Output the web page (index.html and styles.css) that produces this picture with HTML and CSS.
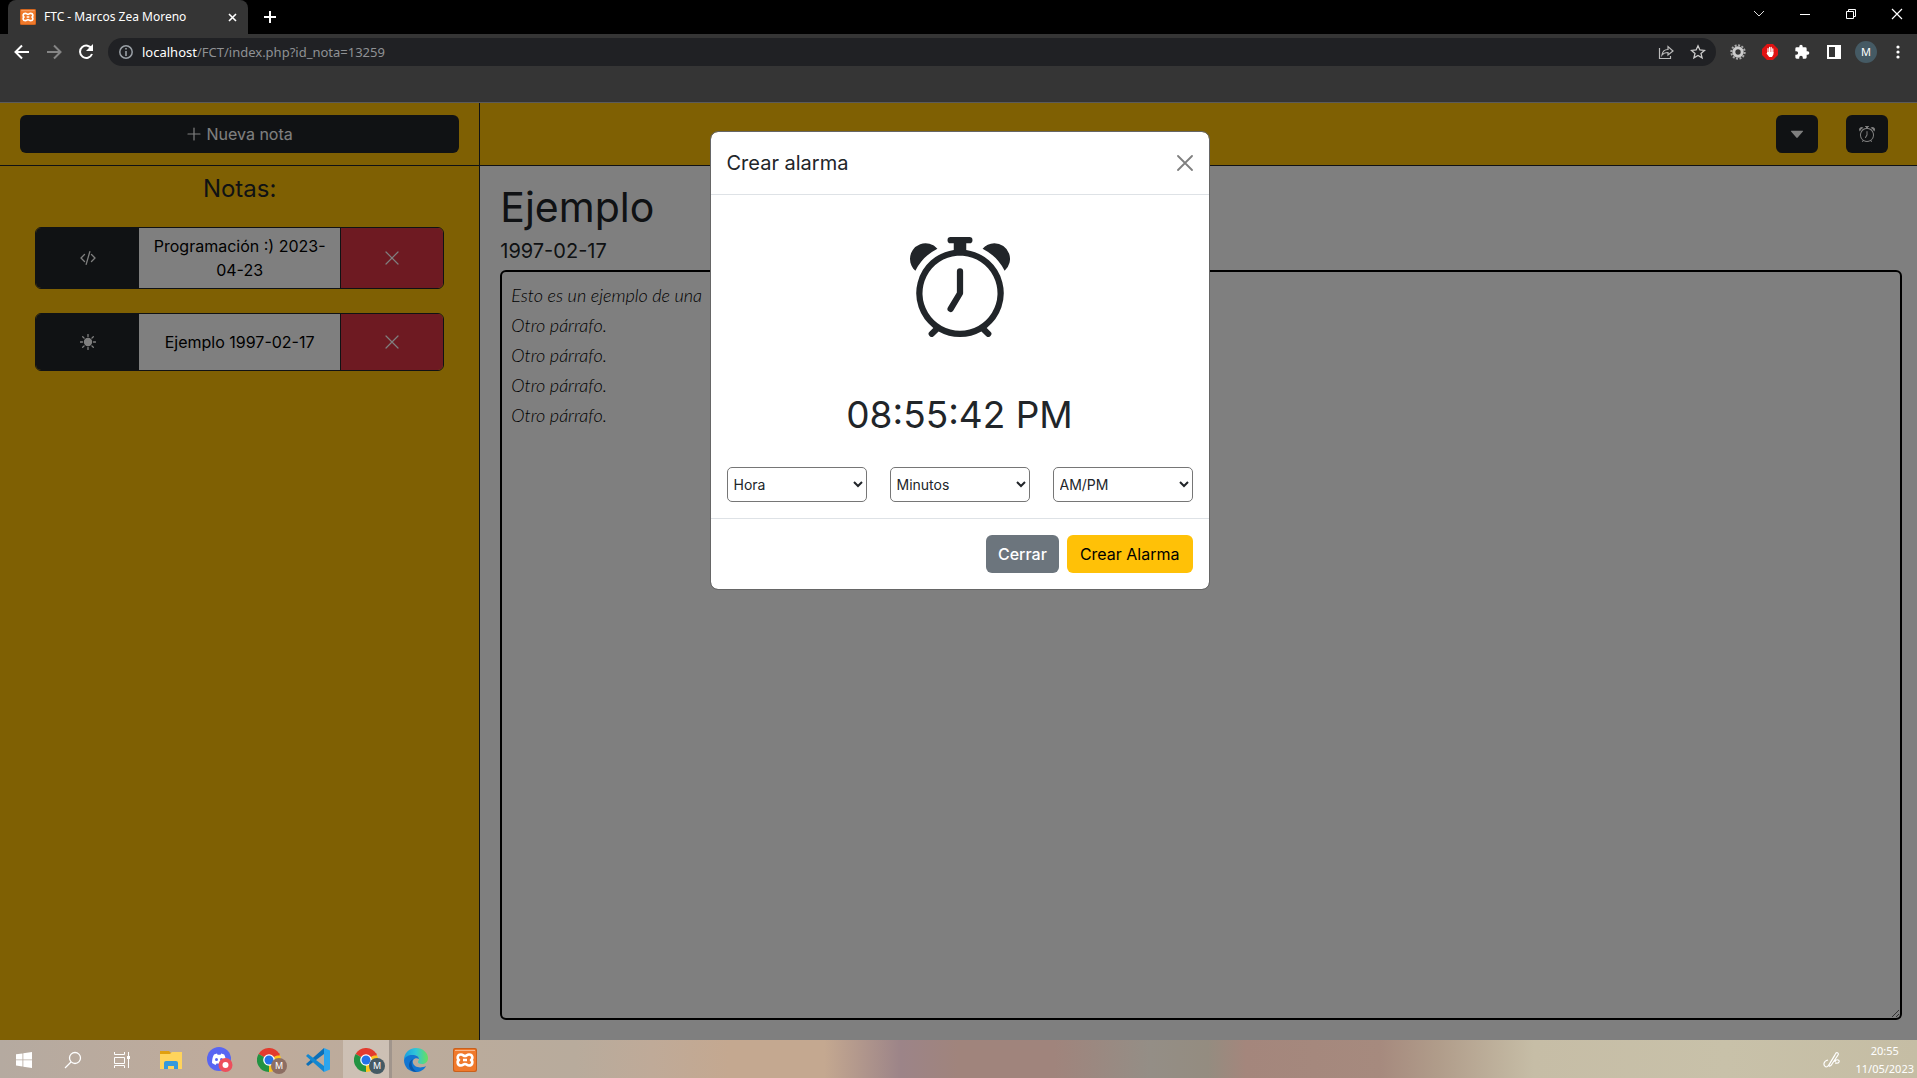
FILE: index.html
```html
<!DOCTYPE html>
<html lang="es">
<head>
<meta charset="utf-8">
<title>FTC - Marcos Zea Moreno</title>
<link rel="stylesheet" href="styles.css">
</head>
<body>
<svg class="defs" aria-hidden="true">
  <symbol id="alarm" viewBox="0 0 16 16"><path d="M8.5 5.5a.5.5 0 0 0-1 0v3.362l-1.429 2.38a.5.5 0 1 0 .858.515l1.5-2.5A.5.5 0 0 0 8.5 9V5.5z"/><path d="M6.5 0a.5.5 0 0 0 0 1H7v1.07a7.001 7.001 0 0 0-3.273 12.474l-.602.602a.5.5 0 0 0 .707.708l.746-.746A6.97 6.97 0 0 0 8 16a6.97 6.97 0 0 0 3.422-.892l.746.746a.5.5 0 0 0 .707-.708l-.601-.602A7.001 7.001 0 0 0 9 2.07V1h.5a.5.5 0 0 0 0-1h-3zm1.038 3.018a6.093 6.093 0 0 1 .924 0 6 6 0 1 1-.924 0zM0 3.5c0 .753.333 1.429.86 1.887A8.035 8.035 0 0 1 4.387 1.86 2.5 2.5 0 0 0 0 3.5zM13.5 1c-.753 0-1.429.333-1.887.86a8.035 8.035 0 0 1 3.527 3.527A2.5 2.5 0 0 0 13.5 1z"/></symbol>
  <symbol id="cross" viewBox="0 0 16 16"><path d="M2 2l12 12M14 2L2 14" fill="none" stroke="currentColor" stroke-width="1.200" stroke-linecap="round"/></symbol>
  <symbol id="xampp" viewBox="0 0 24 24"><rect width="24" height="24" rx="2" fill="#c9601c"/><rect x="1" y="1" width="22" height="22" rx="2" fill="#f0792b"/><path d="M2 2.500h20" stroke="#f9b88a"/><path d="M8 6.500c-4 0-4 4.500-2 5.500-2 1-2 5.500 2 5.500 2 0 2.500-1.500 4-1.500s2 1.500 4 1.500c4 0 4-4.500 2-5.500 2-1 2-5.500-2-5.500-2 0-2.500 1.500-4 1.500S10 6.500 8 6.500zM10 12h4" fill="none" stroke="#fff" stroke-width="2.600" stroke-linejoin="round"/></symbol>
  <symbol id="chrome" viewBox="0 0 24 24"><path d="M12 12L1.600 6A12 12 0 0 1 22.400 6z" fill="#e33b2e"/><path d="M12 12L22.400 6A12 12 0 0 1 12 24z" fill="#fcc31e"/><path d="M12 12v12A12 12 0 0 1 1.600 6z" fill="#229342"/><path d="M12 6.500h10.600" stroke="#e33b2e" stroke-width="2"/><circle cx="12" cy="12" r="5.800" fill="#fff"/><circle cx="12" cy="12" r="4.500" fill="#2472e8"/></symbol>
</svg>

<header class="browser">
  <div class="tabstrip">
    <div class="tab">
      <svg class="favicon"><use href="#xampp"/></svg>
      <span class="tab-title">FTC - Marcos Zea Moreno</span>
      <button class="bare" aria-label="Cerrar pestaña"><svg width="9" height="9" viewBox="0 0 9 9"><path d="M1 1l7 7M8 1L1 8" stroke="#fff" stroke-width="1.600"/></svg></button>
    </div>
    <button class="bare new-tab" aria-label="Nueva pestaña"><svg width="12" height="12" viewBox="0 0 12 12"><path d="M0 6h12M6 0v12" stroke="#fff" stroke-width="2"/></svg></button>
    <div class="window-controls">
      <button class="bare" aria-label="Buscar pestañas"><svg width="12" height="12" viewBox="0 0 12 12"><path d="M1 3l5 5 5-5" fill="none" stroke="#ddd"/></svg></button>
      <button class="bare" aria-label="Minimizar"><svg width="12" height="12" viewBox="0 0 12 12"><path d="M1 6.500h10" stroke="#fff"/></svg></button>
      <button class="bare" aria-label="Restaurar"><svg width="12" height="12" viewBox="0 0 12 12"><path d="M1.500 3.500h7v7h-7zM3.500 3.500v-2h7v7h-2" fill="none" stroke="#fff"/></svg></button>
      <button class="bare window-close" aria-label="Cerrar"><svg width="12" height="12" viewBox="0 0 12 12"><path d="M1 1l10 10M11 1L1 11" stroke="#fff" stroke-width="1.200"/></svg></button>
    </div>
  </div>
  <div class="toolbar">
    <div class="nav">
      <button class="bare" aria-label="Atrás"><svg width="16" height="16" viewBox="0 0 16 16"><path d="M15 8H2M8 1.500L1.500 8 8 14.500" fill="none" stroke="#fff" stroke-width="2"/></svg></button>
      <button class="bare" aria-label="Adelante"><svg width="16" height="16" viewBox="0 0 16 16"><path d="M1 8h13M8 1.500L14.500 8 8 14.500" fill="none" stroke="#858585" stroke-width="2"/></svg></button>
      <button class="bare" aria-label="Recargar"><svg width="16" height="16" viewBox="0 0 16 16"><path d="M13.800 5A6.200 6.200 0 1 0 14 10" fill="none" stroke="#fff" stroke-width="2"/><path d="M15 0v7H8z" fill="#fff"/></svg></button>
    </div>
    <div class="address">
      <svg width="14" height="14" viewBox="0 0 14 14"><circle cx="7" cy="7" r="6.200" fill="none" stroke="#9aa0a6" stroke-width="1.500"/><path d="M7 6v5M7 3v1.600" stroke="#9aa0a6" stroke-width="1.600"/></svg>
      <span class="url"><b>localhost</b>/FCT/index.php?id_nota=13259</span>
      <button class="bare" aria-label="Compartir"><svg width="16" height="16" viewBox="0 0 16 16"><path d="M1.500 4v10.500h11V12M4 11c.5-4 3-5.500 6-5.500V2.500L15 7l-5 4V8.500c-3 0-4.500.5-6 2.500z" fill="none" stroke="#bbb" stroke-width="1.200"/></svg></button>
      <button class="bare" aria-label="Marcar"><svg width="16" height="16" viewBox="0 0 16 16"><path d="M8 1.800l1.900 4.200 4.600.4-3.500 3 1.100 4.500L8 11.500l-4.100 2.400L5 9.400l-3.500-3 4.600-.4z" fill="none" stroke="#ccc" stroke-width="1.300"/></svg></button>
    </div>
    <div class="extensions">
      <svg width="16" height="16" viewBox="0 0 16 16"><circle cx="8" cy="8" r="6.700" fill="none" stroke="#aaa" stroke-width="2" stroke-dasharray="2 1.500"/><circle cx="8" cy="8" r="4.200" fill="none" stroke="#ccc" stroke-width="3"/></svg>
      <svg width="16" height="16" viewBox="0 0 16 16"><path d="M5 0h6l5 5v6l-5 5H5l-5-5V5z" fill="#e01212"/><path d="M6 8.500V4.600M7.600 8V3.400M9.200 8V3.400M10.800 9V4.800" stroke="#fff" stroke-width="1.200" stroke-linecap="round"/><path d="M5.400 8h6v2.500L10 13H7.200L4.500 9.500l.5-.6z" fill="#fff"/></svg>
      <svg width="16" height="16" viewBox="0 0 24 24"><path d="M20.500 11H19V7a2 2 0 0 0-2-2h-4V3.500a2.500 2.500 0 0 0-5 0V5H4a2 2 0 0 0-2 2v3.800h1.500a2.700 2.700 0 0 1 0 5.400H2V20a2 2 0 0 0 2 2h3.800v-1.500a2.700 2.700 0 0 1 5.400 0V22H17a2 2 0 0 0 2-2v-4h1.500a2.500 2.500 0 0 0 0-5z" fill="#fff"/></svg>
      <svg width="16" height="16" viewBox="0 0 16 16"><path d="M1 1h14v14H1zM3 3v10h6V3z" fill="#fff" fill-rule="evenodd"/></svg>
      <span class="avatar">M</span>
      <svg width="16" height="16" viewBox="0 0 16 16" fill="#fff"><circle cx="8" cy="3" r="1.600"/><circle cx="8" cy="8" r="1.600"/><circle cx="8" cy="13" r="1.600"/></svg>
    </div>
  </div>
</header>

<div class="app">
  <aside class="sidebar">
    <div class="bar">
      <button class="btn dark wide"><svg width="16" height="16" viewBox="0 0 16 16"><path d="M8 2v12M2 8h12" stroke="currentColor" stroke-width="1.200" stroke-linecap="round"/></svg> Nueva nota</button>
    </div>
    <h2>Notas:</h2>
    <div class="notes">
      <div class="note">
        <button class="kind" aria-label="Programación"><svg width="16" height="16" viewBox="0 0 16 16" fill="none" stroke="currentColor" stroke-width="1.300" stroke-linecap="round" stroke-linejoin="round"><path d="M4.500 4.500L1 8l3.500 3.500M11.500 4.500L15 8l-3.500 3.500M9.800 1.700L6.200 14.300"/></svg></button>
        <button class="name">Programación :) 2023-04-23</button>
        <button class="remove" aria-label="Eliminar"><svg width="16" height="16"><use href="#cross"/></svg></button>
      </div>
      <div class="note single">
        <button class="kind" aria-label="Ejemplo"><svg width="16" height="16" viewBox="0 0 16 16"><circle cx="8" cy="8" r="4.200" fill="currentColor"/><path d="M8 .5v2M8 13.500v2M.5 8h2M13.500 8h2M2.700 2.700l1.400 1.400M11.900 11.900l1.400 1.400M13.300 2.700l-1.400 1.400M4.100 11.900l-1.400 1.400" stroke="currentColor" stroke-width="1.300" stroke-linecap="round"/></svg></button>
        <button class="name">Ejemplo 1997-02-17</button>
        <button class="remove" aria-label="Eliminar"><svg width="16" height="16"><use href="#cross"/></svg></button>
      </div>
    </div>
  </aside>
  <main class="editor">
    <div class="bar actions">
      <button class="btn dark" aria-label="Más"><svg width="16" height="16" viewBox="0 0 16 16"><path d="M2.500 4.700h11a.5.5 0 0 1 .4.900l-5.200 6a1 1 0 0 1-1.400 0l-5.200-6a.5.5 0 0 1 .4-.9z" fill="currentColor"/></svg></button>
      <button class="btn dark" aria-label="Alarma"><svg width="16" height="16" fill="currentColor"><use href="#alarm"/></svg></button>
    </div>
    <div class="document">
      <h1>Ejemplo</h1>
      <label class="date" for="text">1997-02-17</label>
      <textarea id="text" spellcheck="false">Esto es un ejemplo de una
Otro párrafo.
Otro párrafo.
Otro párrafo.
Otro párrafo.</textarea>
    </div>
  </main>
  <div class="backdrop">
    <section class="modal" role="dialog" aria-labelledby="modal-title">
      <header class="modal-header">
        <h5 id="modal-title">Crear alarma</h5>
        <button class="bare close" aria-label="Cerrar"><svg width="16" height="16" viewBox="0 0 16 16"><path d="M1 1l14 14M15 1L1 15" stroke="currentColor" stroke-width="1.800" stroke-linecap="round"/></svg></button>
      </header>
      <div class="modal-body">
        <svg class="clock"><use href="#alarm"/></svg>
        <div class="time">08:55:42 PM</div>
        <div class="selects">
          <select aria-label="Hora"><option>Hora</option></select>
          <select aria-label="Minutos"><option>Minutos</option></select>
          <select aria-label="AM/PM"><option>AM/PM</option></select>
        </div>
      </div>
      <footer class="modal-footer">
        <button class="btn secondary">Cerrar</button>
        <button class="btn warning">Crear Alarma</button>
      </footer>
    </section>
  </div>
</div>

<footer class="taskbar">
  <button class="task" aria-label="Inicio"><svg width="16" height="16" viewBox="0 0 16 16"><path d="M0 2.300l6.500-.9v6.100H0zM7.300 1.300L16 0v7.500H7.300zM0 8.300h6.500v6.200L0 13.600zM7.300 8.300H16V16l-8.700-1.300z" fill="#fff"/></svg></button>
  <button class="task" aria-label="Buscar"><svg width="18" height="18" viewBox="0 0 18 18"><circle cx="11" cy="7" r="5.500" fill="none" stroke="#fff" stroke-width="1.300"/><path d="M7 11l-6 6" stroke="#fff" stroke-width="1.300"/></svg></button>
  <button class="task" aria-label="Vista de tareas"><svg width="16" height="16" viewBox="0 0 16 16"><path d="M.5 0v2.500h10V0M.5 5.500h10v6H.5zM.5 16v-2.500h10V16M14.500 0v16" fill="none" stroke="#fff"/><path d="M13 4h3v3h-3z" fill="#fff"/></svg></button>
  <button class="task" aria-label="Explorador"><svg width="24" height="24" viewBox="0 0 24 24"><path d="M1 3h9l2 2v5H1z" fill="#e0a010"/><path d="M1 6h10l2-2h10v17H1z" fill="#ffd45c"/><path d="M5 21v-6a2 2 0 0 1 2-2h10a2 2 0 0 1 2 2v6h-4v-3H9v3z" fill="#3699dc"/></svg></button>
  <button class="task" aria-label="Discord"><svg width="26" height="26" viewBox="0 0 26 26"><circle cx="12" cy="12" r="12" fill="#5865f2"/><path d="M5 16c0-4 1-7 2-8.500l3-1 .6 1.200h3L14.200 6.500l3 1C18.500 10 19 13 19 16l-3.500 2-1-1.500h-5l-1 1.500z" fill="#fff"/><circle cx="9.500" cy="12.500" r="1.500" fill="#5865f2"/><circle cx="14.500" cy="12.500" r="1.500" fill="#5865f2"/><circle cx="18.500" cy="18" r="7" fill="#ed4f5c"/><circle cx="18.500" cy="18" r="3" fill="#fff"/></svg></button>
  <button class="task" aria-label="Chrome"><svg width="24" height="24"><use href="#chrome"/></svg><span class="badge brown">M</span></button>
  <button class="task" aria-label="Visual Studio Code"><svg width="24" height="24" viewBox="0 0 24 24"><path d="M18 6L2 18l-2-2 18-16z" fill="#0b6fb8"/><path d="M18 18L2 6 0 8l18 16z" fill="#1387d0"/><path d="M18 0l6 2.500v19L18 24z" fill="#2ba5ee"/></svg></button>
  <button class="task active" aria-label="Chrome"><svg width="24" height="24"><use href="#chrome"/></svg><span class="badge">M</span></button>
  <button class="task" aria-label="Edge"><svg width="24" height="24" viewBox="0 0 24 24"><defs><linearGradient id="edge"><stop stop-color="#1a9ee0"/><stop offset=".5" stop-color="#30c6d8"/><stop offset="1" stop-color="#68e05c"/></linearGradient></defs><path d="M0 12C0 5 5 0 12 0s12 5 12 10c0 4-3 6-6 6-3 0-4-1-4-2s1-1.500 1-3c0-2-2-4-6-4C4 7 1 10 0 12z" fill="url(#edge)"/><path d="M0 12c1-3 4-5 8-5 5 0 7 2 7 4-4-2-7 1-6 4 1 4 7 6 13 3-2 4-6 6-10 6C5 24 0 19 0 12z" fill="#1176d2"/><path d="M9 11c-3 4-1 10 4 12.900C7 24 5 20 5 17s2-5 4-6z" fill="#0c55a5"/></svg></button>
  <button class="task" aria-label="XAMPP"><svg width="24" height="24"><use href="#xampp"/></svg></button>
  <div class="tray">
    <svg width="18" height="18" viewBox="0 0 18 18"><path d="M5 9c-5 1-5 6-2 7 2 0 3-2 4-4l6-10c1-1 3 0 2 2L9 13c-1 2-3 3-3 1l6-10M12 11c0-3 5-3 4 0-1 2-3 1-4 1" fill="none" stroke="#fff" stroke-width="1.200"/></svg>
    <div class="datetime"><span>20:55</span><span>11/05/2023</span></div>
  </div>
</footer>
</body>
</html>
```
FILE: styles.css
```css
* { box-sizing: border-box; }
body {
  margin: 0;
  min-height: 100vh;
  display: flex;
  flex-direction: column;
  font: 16px/24px Inter, "Liberation Sans", sans-serif;
  color: #212529;
}
button, select, textarea { font: inherit; margin: 0; }
h1, h2, h5 { margin: 0; font-weight: 400; }
svg { flex: none; }
.defs { position: absolute; width: 0; height: 0; }
.bare { display: flex; align-items: center; justify-content: center; padding: 0; border: 0; background: none; }

/* Browser window */
.browser {
  height: 103px;
  background: #353535;
  border-bottom: 1px solid #5b5b5b;
  font-family: "Noto Sans", sans-serif;
  color: #fff;
}
.tabstrip { display: flex; height: 34px; background: #000; }
.tab {
  display: flex;
  align-items: center;
  gap: 8px;
  width: 240px;
  margin-left: 8px;
  padding: 0 11px 0 12px;
  background: #353535;
  border-radius: 8px 8px 0 0;
  font-size: 12px;
}
.favicon { width: 16px; height: 16px; }
.tab-title { flex: 1; white-space: nowrap; }
.new-tab { width: 44px; }
.window-controls { display: flex; margin-left: auto; padding-bottom: 6px; }
.window-controls .bare { width: 46px; }
.window-controls .window-close { width: 43px; padding-left: 3px; }
.toolbar { display: flex; align-items: center; height: 36px; }
.nav { display: flex; gap: 16px; padding: 0 14px; }
.address {
  flex: 1;
  display: flex;
  align-items: center;
  gap: 16px;
  height: 28px;
  padding: 0 10px 0 11px;
  border-radius: 14px;
  background: #202124;
}
.url { flex: 1; margin-left: -7px; font-size: 13px; color: #8f9194; }
.url b { font-weight: 400; color: #fff; }
.extensions { display: flex; align-items: center; gap: 16px; padding: 0 11px 0 14px; }
.avatar {
  width: 22px;
  margin: 0 -3px;
  border-radius: 50%;
  background: #455a64;
  text-align: center;
  font-size: 11px;
  line-height: 22px;
}

/* Notes application */
.app { position: relative; flex: 1; display: flex; background: #fff; }
.sidebar { width: calc(25% + 1px); background: #ffc107; border-right: 1px solid #212529; }
.bar { display: flex; align-items: center; height: 63px; padding: 0 20px; background: #ffc107; border-bottom: 1px solid #212529; }
.btn { display: flex; align-items: center; justify-content: center; gap: 4px; height: 38px; padding: 0 13px; border: 0; border-radius: 6px; }
.dark { background: #212529; color: #fff; }
.wide { flex: 1; }
.sidebar h2 { padding-top: 8px; text-align: center; font-size: 24px; line-height: 29px; }
.notes { display: flex; flex-direction: column; gap: 24px; padding: 24px 35px; }
.note {
  display: grid;
  grid-template-columns: 103px 1fr 103px;
  min-height: 62px;
  overflow: hidden;
  border: 1px solid #212529;
  border-radius: 6px;
}
.note.single { min-height: 58px; }
.note button { padding: 6px 12px; border: 0; background: #fff; color: #000; }
.note svg { display: block; margin: auto; }
.note .kind { background: #212529; color: #fff; }
.note .remove { border-left: 1px solid #212529; background: #dc3545; color: #fff; }
.editor { flex: 1; display: flex; flex-direction: column; }
.actions { justify-content: flex-end; gap: 28px; padding-right: 29px; }
.document { flex: 1; display: flex; flex-direction: column; padding: 17px 15px 20px 20px; }
.document h1 { font-size: 41px; line-height: 48px; }
.date { padding: 8px 0 7px; font-size: 20px; line-height: 24px; }
textarea {
  flex: 1;
  padding: 8px 9px;
  border: 2px solid #000;
  border-radius: 6px;
  background: #fff;
  color: #000;
  font: italic 300 18px/30px Lato, sans-serif;
}

/* Alarm dialog */
.backdrop { position: absolute; inset: 0; padding: 28px 0 0 2px; background: rgba(0, 0, 0, .5); }
.modal { width: 500px; margin: 0 auto; border: 1px solid #666; border-radius: 8px; background: #fff; background-clip: padding-box; }
.modal-header { display: flex; align-items: center; justify-content: space-between; height: 63px; padding: 0 16px; border-bottom: 1px solid #dee2e6; }
.modal-header h5 { font-size: 20px; line-height: 30px; }
.close { color: #7f7f7f; }
.modal-body { padding: 42px 16px 16px; text-align: center; }
.clock { display: block; width: 100px; height: 100px; margin: 0 auto; fill: #212529; }
.time { padding: 54px 0 28px; font-size: 37px; line-height: 48px; }
.selects { display: grid; grid-template-columns: repeat(3, 1fr); gap: 23px; }
select { height: 35px; padding: 0 2px; border: 1px solid #767676; border-radius: 5px; background: #fff; font-size: 14px; color: #212529; }
.modal-footer { display: flex; justify-content: flex-end; gap: 8px; padding: 16px; border-top: 1px solid #dee2e6; }
.secondary { padding: 0 12px; background: #6c757d; color: #fff; font-weight: 500; }
.warning { background: #ffc107; color: #000; }

/* Desktop taskbar */
.taskbar {
  display: flex;
  height: 38px;
  background: linear-gradient(90deg, #b5aaa0, #bfab9b 12%, #b8ab9c 30%, #bfaa98 34%, #c4a890 38%, #c4a890 43%, #9c8488 47%, #a0847c 50%, #a0847c 55%, #948e86 60%, #948c80 63%, #a4867c 65%, #a68a7e 72%, #b09c8a 75%, #c6bda6 80%, #c8c1a9 90%, #c5bda4);
  font-family: "Noto Sans", sans-serif;
}
.task { position: relative; display: flex; align-items: center; justify-content: center; width: 49px; padding: 2px 1px 0 0; border: 0; background: none; }
.active { background: rgba(255, 255, 255, .25); border-right: 3px solid #a1958c; }
.badge {
  position: absolute;
  right: 7px;
  bottom: 4px;
  width: 16px;
  border-radius: 50%;
  background: #455a64;
  color: #fff;
  font-size: 9px;
  line-height: 16px;
}
.active .badge { right: 4px; }
.brown { background: #8d6e63; }
.tray { display: flex; align-items: center; gap: 14px; margin-left: auto; padding: 2px 3px 0 0; color: #fff; font-size: 11px; line-height: 18px; }
.datetime { display: flex; flex-direction: column; align-items: center; }
```
